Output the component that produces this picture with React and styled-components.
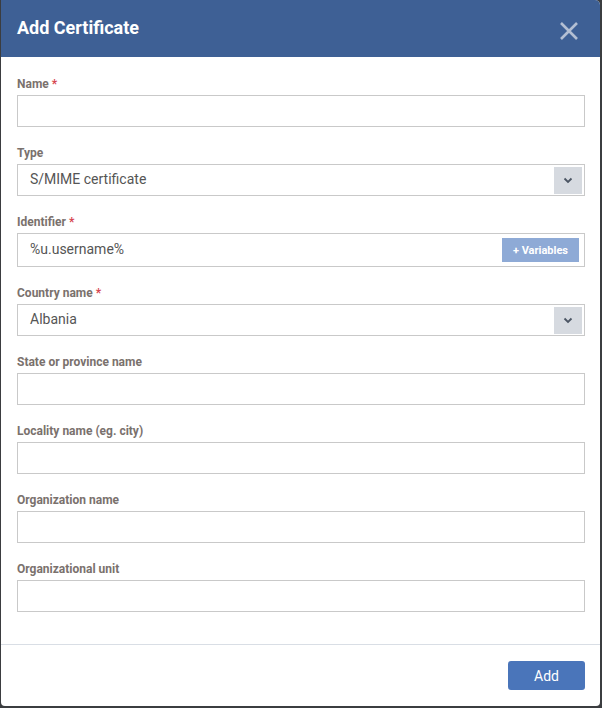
import React from "react";
import styled, { createGlobalStyle } from "styled-components";

const GlobalStyle = createGlobalStyle`
  html, body {
    margin: 0;
    padding: 0;
    background: #3b3d40;
    font-family: Roboto, "Liberation Sans", sans-serif;
  }
`;

const Dialog = styled.div`
  box-sizing: border-box;
  width: 599px;
  height: 706px;
  margin-left: 1px;
  background: #fff;
  border-radius: 0 5px 4px 4px;
  overflow: hidden;
  display: flex;
  flex-direction: column;
`;

const Header = styled.div`
  height: 57px;
  flex: none;
  background: #3e6095;
  display: flex;
  align-items: center;
  justify-content: space-between;
  padding: 0 21px 0 16px;
`;

const Title = styled.h2`
  margin: 0;
  margin-top: -2px;
  color: #fff;
  font-size: 18px;
  font-weight: 700;
`;

const CloseButton = styled.button`
  border: 0;
  background: none;
  padding: 0;
  width: 20px;
  height: 20px;
  margin-top: 4px;
  display: flex;
  cursor: pointer;
`;

const Body = styled.div`
  flex: 1;
  padding: 20px 15px 0 16px;
`;

const Field = styled.div`
  margin-bottom: 19px;
`;

const Label = styled.div`
  font-size: 12px;
  line-height: 14px;
  font-weight: 700;
  color: #7a716d;
  margin-bottom: 4px;
  span {
    color: #d6454f;
    margin-left: 3px;
  }
`;

const Box = styled.div`
  box-sizing: border-box;
  height: ${(p) => p.$h || 32}px;
  border: 1px solid #c9c9c9;
  display: flex;
  align-items: center;
  padding: 0 2px 0 12px;
  font-size: 14px;
  color: #555;
`;

const Value = styled.div`
  flex: 1;
  margin-bottom: 2px;
`;

const ArrowBox = styled.div`
  width: 28px;
  height: 27px;
  background: #d6dae0;
  display: flex;
  align-items: center;
  justify-content: center;
`;

const VarButton = styled.button`
  border: 0;
  background: #8eaad6;
  color: #fff;
  font-family: inherit;
  font-size: 11px;
  font-weight: 700;
  height: 24px;
  width: 77px;
  margin-right: 3px;
  padding: 0;
`;

const Footer = styled.div`
  box-sizing: border-box;
  border-top: 1px solid #d9dee5;
  height: 62px;
  flex: none;
  margin-top: 13px;
  display: flex;
  justify-content: flex-end;
  align-items: flex-start;
  padding: 16px 15px 0 0;
`;

const AddButton = styled.button`
  border: 0;
  border-radius: 3px;
  background: #4a75ba;
  color: #fff;
  font-family: inherit;
  font-size: 14px;
  width: 77px;
  height: 29px;
`;

const Chevron = () => (
  <svg width="10" height="7" viewBox="0 0 10 7">
    <path d="M1.5 1.5 L5 5 L8.5 1.5" fill="none" stroke="#4b5563" strokeWidth="1.8" />
  </svg>
);

const fields = [
  { label: "Name", req: true },
  { label: "Type", kind: "select", value: "S/MIME certificate" },
  { label: "Identifier", req: true, kind: "vars", value: "%u.username%" },
  { label: "Country name", req: true, kind: "select", value: "Albania" },
  { label: "State or province name" },
  { label: "Locality name (eg. city)" },
  { label: "Organization name" },
  { label: "Organizational unit" },
];

export default function App() {
  return (
    <>
      <GlobalStyle />
      <Dialog>
        <Header>
          <Title>Add Certificate</Title>
          <CloseButton aria-label="close">
            <svg width="20" height="20" viewBox="0 0 20 20">
              <path d="M2 2 L18 18 M18 2 L2 18" stroke="#b3bfd3" strokeWidth="2.6" />
            </svg>
          </CloseButton>
        </Header>
        <Body>
          {fields.map((f) => (
            <Field key={f.label}>
              <Label>
                {f.label}
                {f.req && <span>*</span>}
              </Label>
              <Box $h={f.kind === "vars" ? 34 : 32}>
                <Value>{f.value}</Value>
                {f.kind === "select" && (
                  <ArrowBox>
                    <Chevron />
                  </ArrowBox>
                )}
                {f.kind === "vars" && <VarButton>+ Variables</VarButton>}
              </Box>
            </Field>
          ))}
        </Body>
        <Footer>
          <AddButton>Add</AddButton>
        </Footer>
      </Dialog>
    </>
  );
}
